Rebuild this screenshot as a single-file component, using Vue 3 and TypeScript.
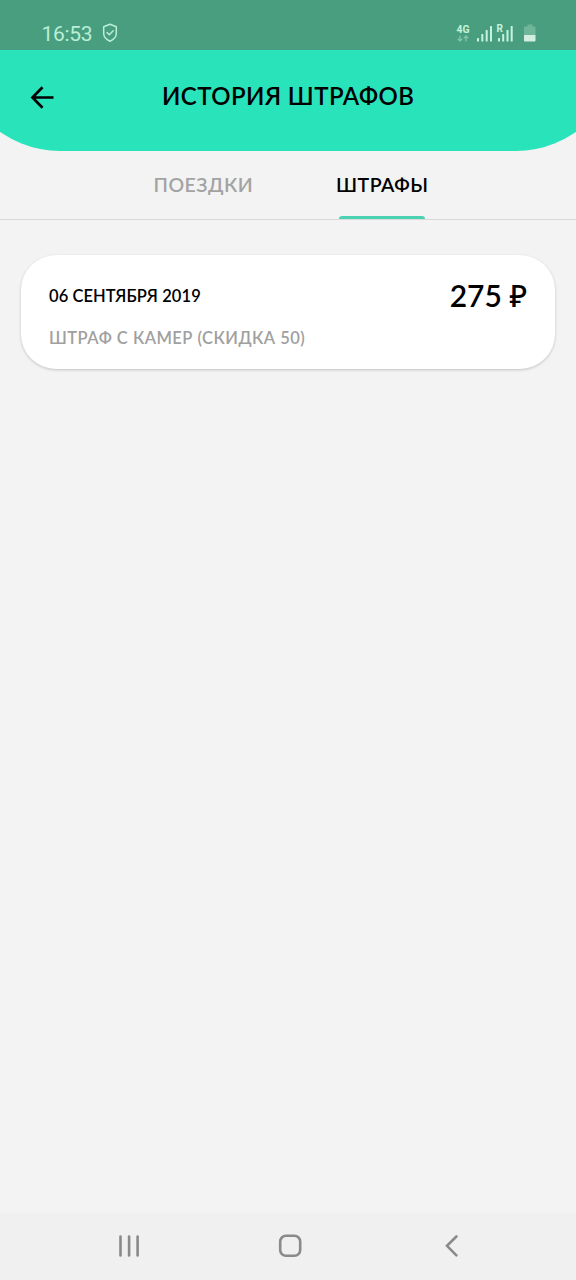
<script setup lang="ts">
import { ref } from 'vue'

interface Tab { id: string; label: string }
interface Fine { date: string; reason: string; amount: number }

const tabs: Tab[] = [
  { id: 'trips', label: 'ПОЕЗДКИ' },
  { id: 'fines', label: 'ШТРАФЫ' },
]
const active = ref('fines')
const fines: Fine[] = [
  { date: '06 СЕНТЯБРЯ 2019', reason: 'ШТРАФ С КАМЕР (СКИДКА 50)', amount: 275 },
]
</script>

<template>
  <div class="screen">
    <header class="top">
      <div class="status">
        <span class="time">16:53</span>
        <svg class="shield" width="16" height="20" viewBox="0 0 16 20">
          <path d="M8 1.3 14.3 3.7V10.5C14.3 14 11.5 16.6 8 18.2C4.500 16.600 1.700 14 1.700 10.500V3.700Z" />
          <path d="M5 9.500 7.300 11.800 11.200 7.800" />
        </svg>
        <svg class="signals" width="84" height="22" viewBox="0 0 84 22">
          <g fill="#c5f3dd">
            <text x="0.500" y="9.500" class="net" textLength="13" lengthAdjust="spacingAndGlyphs">4G</text>
            <text x="40.500" y="8.500" class="net">R</text>
            <rect x="21" y="15" width="2" height="3.500" rx="0.500" />
            <rect x="25.300" y="11" width="2" height="7.500" rx="0.500" />
            <rect x="29.700" y="7" width="2" height="11.500" rx="0.500" />
            <rect x="34" y="3" width="2" height="15.500" rx="0.500" />
            <rect x="42" y="15" width="2" height="3.500" rx="0.500" />
            <rect x="46.200" y="11" width="2" height="7.500" rx="0.500" />
            <rect x="50.500" y="7" width="2" height="11.500" rx="0.500" />
            <rect x="54.700" y="3" width="2" height="15.500" rx="0.500" />
          </g>
          <path class="arrows" d="M4 12.500V18M1.800 15.800 4 18 6.200 15.800M10 18.500V13M7.800 15.200 10 13 12.200 15.200" />
          <path d="M71.500 1.500H76.500V3.500H78.500Q79.500 3.500 79.500 4.500V12H68V4.500Q68 3.500 69 3.500H71.500Z" fill="#6fb598" />
          <path d="M68 12H79.500V17.500Q79.500 18.500 78.500 18.500H69Q68 18.500 68 17.500Z" fill="#d3eee0" />
        </svg>
      </div>
      <div class="bar">
        <svg class="back" width="26" height="26" viewBox="0 0 26 26">
          <path d="M24.500 12.500H3.800M13.500 2.300 3.500 12.500 13.500 22.700" />
        </svg>
        <h1 class="title">ИСТОРИЯ ШТРАФОВ</h1>
      </div>
    </header>

    <nav class="tabs">
      <button
        v-for="tab in tabs"
        :key="tab.id"
        class="tab"
        :class="[tab.id, { active: tab.id === active }]"
        @click="active = tab.id"
      >{{ tab.label }}</button>
    </nav>

    <main class="list">
      <article v-for="fine in fines" :key="fine.date" class="card">
        <div class="info">
          <div class="date">{{ fine.date }}</div>
          <div class="reason">{{ fine.reason }}</div>
        </div>
        <div class="amount">{{ fine.amount }} <span class="currency">₽</span></div>
      </article>
    </main>

    <footer class="nav">
      <svg class="recents" width="22" height="22" viewBox="0 0 22 22">
        <path d="M2.500 1.500V20.500M11.100 1.500V20.500M19.600 1.500V20.500" />
      </svg>
      <svg class="home" width="24" height="24" viewBox="0 0 24 24">
        <rect x="2.200" y="1.800" width="20" height="20" rx="5.800" />
      </svg>
      <svg class="prev" width="14" height="22" viewBox="0 0 14 22">
        <path d="M11.400 1.500 2 10.800 11.400 20.300" />
      </svg>
    </footer>
  </div>
</template>

<style>
body { margin: 0; }
</style>

<style scoped>
.screen {
  width: 576px;
  height: 1280px;
  display: flex;
  flex-direction: column;
  overflow: hidden;
  background: #f3f3f3;
  color: #000;
  font-family: Lato, "Noto Sans", sans-serif;
  font-weight: 600;
}
.top {
  flex: none;
  box-sizing: border-box;
  height: 151px;
  margin: 0 -42px;
  padding: 0 42px;
  background: #29e3bb;
  border-radius: 0 0 102px 102px / 0 0 101px 101px;
}
.status {
  display: flex;
  height: 50px;
  margin: 0 -42px;
  padding: 0 78px 0 84px;
  background: #4a9e80;
}
.time {
  width: 60px;
  padding-top: 22px;
  font: 400 21px/24px Roboto, sans-serif;
  letter-spacing: -0.3px;
  text-indent: -0.6px;
  white-space: nowrap;
  color: #b9efd5;
}
.shield {
  margin: 23px auto 0 0;
  fill: none;
  stroke: #b9efd5;
  stroke-width: 1.5;
  stroke-linejoin: round;
  stroke-linecap: round;
}
.signals { margin-top: 23px; }
.net { font: 700 10px Roboto, sans-serif; }
.arrows { fill: none; stroke: #82c5a7; stroke-width: 1.300; }
.bar { display: flex; height: 101px; }
.back {
  margin: 35px 0 0 29px;
  fill: none;
  stroke: #000;
  stroke-width: 2.700;
}
.title {
  margin: 30px 0 0 107px;
  font-size: 24px;
  line-height: 32px;
  font-weight: 600;
  letter-spacing: 0.420px;
  white-space: nowrap;
}
.tabs {
  flex: none;
  display: flex;
  height: 68px;
  padding-left: 153px;
  border-bottom: 1px solid #dadada;
}
.tab {
  position: relative;
  padding: 0 0 1px;
  border: 0;
  background: none;
  color: #a3a3a3;
  font: 600 19.500px/24px Lato, "Noto Sans", sans-serif;
  letter-spacing: 0.480px;
  text-align: left;
  white-space: nowrap;
}
.tab.trips { width: 183px; text-indent: 0.500px; }
.tab.fines { width: 92px; }
.tab.active { color: #000; }
.tab.active::after {
  content: "";
  position: absolute;
  left: 3px;
  bottom: 0;
  width: 86px;
  height: 3px;
  border-radius: 3px 3px 0 0;
  background: #4bd2b2;
}
.list { flex: 1; padding: 35px 21px 0; }
.card {
  display: flex;
  justify-content: space-between;
  box-sizing: border-box;
  height: 113.500px;
  padding: 30px 28px 0;
  border-radius: 35px;
  background: #fff;
  box-shadow: 0 1px 3px rgba(0, 0, 0, 0.200);
}
.date, .reason { font-size: 16.500px; line-height: 22px; white-space: nowrap; }
.date { letter-spacing: 0.080px; }
.reason { margin-top: 20px; color: #a0a0a0; letter-spacing: 0.480px; }
.amount {
  margin-top: -8px;
  font-size: 30px;
  line-height: 36px;
  white-space: nowrap;
}
.currency { font-weight: 500; }
.nav {
  flex: none;
  display: flex;
  height: 67px;
  background: #f0f0f0;
  fill: none;
  stroke: #8a8a8a;
  stroke-width: 2.600;
  stroke-linecap: round;
}
.recents { margin: 22px 0 0 118px; }
.home { margin: 21px 0 0 138px; }
.prev { margin: 22px 0 0 143px; }
</style>
